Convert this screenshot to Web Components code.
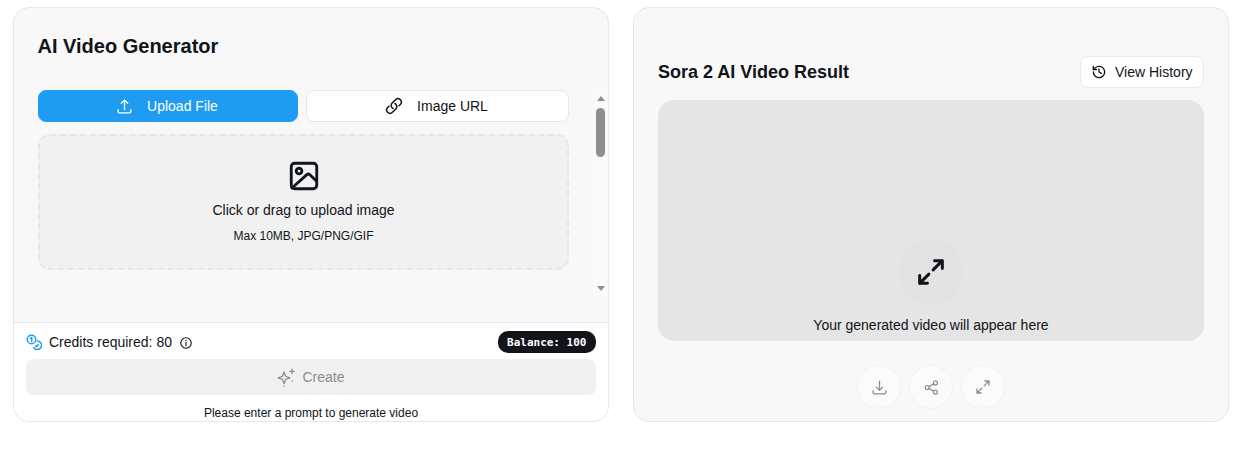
<!DOCTYPE html>
<html>
<head>
<meta charset="utf-8">
<title>AI Video Generator</title>
<style>
    html, body { margin: 0; background: #fff; }
    body { font-family: "Liberation Sans", Arial, sans-serif; color: #111418; }
</style>
</head>
<body>
<video-page>
    <generator-panel></generator-panel>
    <result-panel></result-panel>
</video-page>

<script>
const ICONS = {
    upload: '<path d="M3 16.500v2.250A2.250 2.250 0 0 0 5.250 21h13.500A2.250 2.250 0 0 0 21 18.750V16.500m-13.500-9L12 3m0 0 4.500 4.500M12 3v13.500"/>',
    link: '<path d="M13.190 8.688a4.500 4.500 0 0 1 1.242 7.244l-4.500 4.500a4.500 4.500 0 0 1-6.364-6.364l1.757-1.757m13.350-.622 1.757-1.757a4.500 4.500 0 0 0-6.364-6.364l-4.500 4.500a4.500 4.500 0 0 0 1.242 7.244"/>',
    image: '<rect x="3" y="3" width="18" height="18" rx="2.500"/><circle cx="8.500" cy="8.500" r="2"/><path d="M3.500 20.500L14 11a1.500 1.500 0 0 1 2 0l4.700 4.500"/>',
    info: '<circle cx="12" cy="12" r="9"/><path d="M12 11v5.500M12 7.500v.5"/>',
    sparkle: '<path d="M8.500 6l1.900 5.100 5.100 1.900-5.100 1.900L8.500 20l-1.900-5.100L1.500 13l5.100-1.900z"/><path d="M18 2.500v5.500M15.250 5.250h5.500M18.500 16.500v.5M8.500 22.500v.5"/>',
    history: '<path d="M3.500 12a8.500 8.500 0 1 0 2.700-6.200L3.500 8.300"/><path d="M3.500 3.500v4.800h4.800"/><path d="M12 7.500V12l3.500 2"/>',
    expand: '<path d="M14.500 4H20v5.500M20 4l-6.500 6.500M9.500 20H4v-5.500M4 20l6.500-6.500"/>',
    download: '<path d="M3 16.500v2.250A2.250 2.250 0 0 0 5.250 21h13.500A2.250 2.250 0 0 0 21 18.750V16.500M7.500 11.500 12 16m0 0 4.500-4.500M12 16V3"/>',
    share: '<circle cx="6" cy="12" r="2.800"/><circle cx="17.500" cy="5.500" r="2.800"/><circle cx="17.500" cy="18.500" r="2.800"/><path d="M8.500 10.600l6.500-3.700M8.500 13.400l6.500 3.700"/>'
};

function icon(name, size, weight) {
    return `<svg width="${size}" height="${size}" viewBox="0 0 24 24" fill="none" stroke="currentColor" stroke-width="${weight}" stroke-linecap="round" stroke-linejoin="round" aria-hidden="true">${ICONS[name]}</svg>`;
}

// two overlapping coins, drawn on a 16 unit box
const COINS = `<svg width="16" height="16" viewBox="0 0 16 16" fill="none" stroke="currentColor" stroke-width="1.500" stroke-linecap="round" stroke-linejoin="round" aria-hidden="true">
    <circle cx="5.500" cy="5.500" r="4.300"/>
    <path d="M4.500 4.300l1.200-.8v4"/>
    <path d="M11.500 7a4.300 4.300 0 1 1-3.800 6.700"/>
    <path d="M9.500 11.800l1.200 .9 1.500-1.900"/>
</svg>`;

class VideoPage extends HTMLElement {
    constructor() {
        super();
        this.attachShadow({ mode: 'open' });
    }

    connectedCallback() {
        this.shadowRoot.innerHTML = `
            <style>
                :host {
                    display: grid;
                    grid-template-columns: 596px 596px;
                    gap: 24px;
                    padding: 7px 13px;
                    height: 415px;
                }
            </style>
            <slot></slot>
        `;
    }
}

// the browser hides its own scrollbars in the photograph, so this one is drawn
class RailScrollbar extends HTMLElement {
    constructor() {
        super();
        this.attachShadow({ mode: 'open' });
    }

    connectedCallback() {
        this.shadowRoot.innerHTML = `
            <style>
                :host {
                    display: flex;
                    flex-direction: column;
                    align-items: center;
                    flex: none;
                    width: 15px;
                    background: #fafafa;
                }
                .up, .down {
                    width: 0;
                    height: 0;
                    border-left: 4.500px solid transparent;
                    border-right: 4.500px solid transparent;
                }
                .up { margin-top: 6px; border-bottom: 5px solid #8f8f8f; }
                .down { margin-bottom: 7px; border-top: 5px solid #8f8f8f; }
                .thumb {
                    margin-top: 7px;
                    width: 9px;
                    height: 49px;
                    border-radius: 5px;
                    background: #8f8f8f;
                }
                .gap { flex: 1; }
            </style>
            <div class="up"></div>
            <div class="thumb"></div>
            <div class="gap"></div>
            <div class="down"></div>
        `;
    }
}

class GeneratorPanel extends HTMLElement {
    constructor() {
        super();
        this.attachShadow({ mode: 'open' });
    }

    connectedCallback() {
        this.shadowRoot.innerHTML = `
            <style>
                :host {
                    display: flex;
                    flex-direction: column;
                    box-sizing: border-box;
                    height: 415px;
                    background: #f8f8f8;
                    border: 1px solid #e3e8eb;
                    border-radius: 16px;
                    overflow: hidden;
                }
                h1 {
                    margin: 0;
                    padding: 27px 23.500px 0;
                    font-size: 20px;
                    line-height: 23px;
                    font-weight: 700;
                    flex: none;
                    height: 28px;
                }
                .scroll {
                    margin-top: 27px;
                    height: 208px;
                    flex: none;
                    display: flex;
                }
                .inner {
                    flex: 1;
                    min-width: 0;
                    padding: 0 24px;
                    overflow: hidden;
                }
                .tabs {
                    display: grid;
                    grid-template-columns: 260fr 263fr;
                    gap: 8px;
                }
                .tab {
                    display: flex;
                    align-items: center;
                    justify-content: center;
                    gap: 14px;
                    height: 32px;
                    box-sizing: border-box;
                    border-radius: 8px;
                    font-size: 14px;
                    background: #fff;
                    border: 1px solid #e3e8eb;
                    color: #111418;
                }
                .tab span { padding-right: 2px; }
                .tab.active {
                    background: #1f9cf2;
                    border-color: #1f9cf2;
                    color: #fff;
                }
                .tab svg { display: block; }
                .drop {
                    margin-top: 12px;
                    height: 136px;
                    box-sizing: border-box;
                    border: 2px dashed #e3e8eb;
                    border-radius: 12px;
                    background: #f1f1f1;
                    display: flex;
                    flex-direction: column;
                    align-items: center;
                    padding-top: 23px;
                }
                .drop svg { display: block; color: #111418; }
                .drop p { margin: 0; }
                .drop .main { margin-top: 7px; font-size: 14px; line-height: 20px; }
                .drop .sub { margin-top: 8px; font-size: 12px; line-height: 16px; }
                .foot {
                    margin-top: 24px;
                    flex: 1;
                    background: #fff;
                    border-top: 1px solid #e3e8eb;
                    padding: 8px 12px 0;
                    display: flex;
                    flex-direction: column;
                }
                .credits {
                    display: flex;
                    align-items: center;
                    height: 22px;
                    font-size: 14px;
                }
                .credits .coin { color: #1f9cf2; display: block; margin-right: 7px; height: 16px; }
                .credits .info { display: block; margin-left: 7px; height: 14px; margin-top: 1px; }
                .credits svg { display: block; }
                .balance {
                    margin-left: auto;
                    background: #111418;
                    color: #fff;
                    border-radius: 10px;
                    padding: 0 9.500px;
                    height: 22px;
                    font: 700 11px/23px "DejaVu Sans Mono", monospace;
                }
                .create {
                    margin-top: 6px;
                    height: 36px;
                    background: #f0f0f0;
                    border-radius: 8px;
                    display: flex;
                    align-items: center;
                    justify-content: center;
                    gap: 5px;
                    color: #8c8c8c;
                    font-size: 14px;
                }
                .create svg { display: block; }
                .hint {
                    margin: 10px 0 0;
                    text-align: center;
                    font-size: 12px;
                    line-height: 16px;
                }
            </style>
            <h1>AI Video Generator</h1>
            <div class="scroll">
                <div class="inner">
                    <div class="tabs">
                        <div class="tab active">${icon('upload', 17, 1.900)}<span>Upload File</span></div>
                        <div class="tab">${icon('link', 18, 2)}<span>Image URL</span></div>
                    </div>
                    <div class="drop">
                        ${icon('image', 34, 2)}
                        <p class="main">Click or drag to upload image</p>
                        <p class="sub">Max 10MB, JPG/PNG/GIF</p>
                    </div>
                </div>
                <rail-scrollbar></rail-scrollbar>
            </div>
            <div class="foot">
                <div class="credits">
                    <span class="coin">${COINS}</span>
                    <span>Credits required: 80</span>
                    <span class="info">${icon('info', 14, 1.900)}</span>
                    <span class="balance">Balance: 100</span>
                </div>
                <div class="create">${icon('sparkle', 20, 1.500)}<span>Create</span></div>
                <p class="hint">Please enter a prompt to generate video</p>
            </div>
        `;
    }
}

class ResultPanel extends HTMLElement {
    constructor() {
        super();
        this.attachShadow({ mode: 'open' });
    }

    connectedCallback() {
        this.shadowRoot.innerHTML = `
            <style>
                :host {
                    display: flex;
                    flex-direction: column;
                    box-sizing: border-box;
                    height: 415px;
                    background: #f8f8f8;
                    border: 1px solid #e3e8eb;
                    border-radius: 16px;
                    padding: 48px 24px 0;
                }
                .head {
                    display: flex;
                    align-items: center;
                    justify-content: space-between;
                    height: 32px;
                }
                h2 { margin: 0; font-size: 18px; font-weight: 700; }
                .history {
                    display: flex;
                    align-items: center;
                    gap: 8px;
                    height: 32px;
                    width: 124px;
                    box-sizing: border-box;
                    padding: 0 0 0 10px;
                    background: #fff;
                    border: 1px solid #e3e8eb;
                    border-radius: 8px;
                    font-size: 14px;
                }
                .history svg { display: block; }
                .preview {
                    margin-top: 12px;
                    height: 241px;
                    background: #e5e5e5;
                    border-radius: 16px;
                    display: flex;
                    flex-direction: column;
                    align-items: center;
                    justify-content: flex-end;
                    padding-bottom: 8px;
                    box-sizing: border-box;
                    font-size: 14px;
                }
                .circle {
                    width: 64px;
                    height: 64px;
                    border-radius: 50%;
                    background: #e3e3e3;
                    display: flex;
                    align-items: center;
                    justify-content: center;
                    margin-bottom: 13px;
                }
                .circle svg { display: block; color: #111418; }
                .actions {
                    margin-top: 24px;
                    display: flex;
                    justify-content: center;
                    gap: 8px;
                }
                .action {
                    width: 44px;
                    height: 44px;
                    box-sizing: border-box;
                    border-radius: 50%;
                    background: #fbfbfb;
                    border: 1px solid #f2f2f2;
                    display: flex;
                    align-items: center;
                    justify-content: center;
                    color: #8c8c8c;
                }
                .action svg { display: block; }
            </style>
            <div class="head">
                <h2>Sora 2 AI Video Result</h2>
                <div class="history">${icon('history', 16, 2)}<span>View History</span></div>
            </div>
            <div class="preview">
                <div class="circle">${icon('expand', 34, 2.100)}</div>
                <div>Your generated video will appear here</div>
            </div>
            <div class="actions">
                <div class="action">${icon('download', 17, 1.800)}</div>
                <div class="action">${icon('share', 17, 1.700)}</div>
                <div class="action">${icon('expand', 18, 1.700)}</div>
            </div>
        `;
    }
}

customElements.define('video-page', VideoPage);
customElements.define('rail-scrollbar', RailScrollbar);
customElements.define('generator-panel', GeneratorPanel);
customElements.define('result-panel', ResultPanel);
</script>
</body>
</html>
